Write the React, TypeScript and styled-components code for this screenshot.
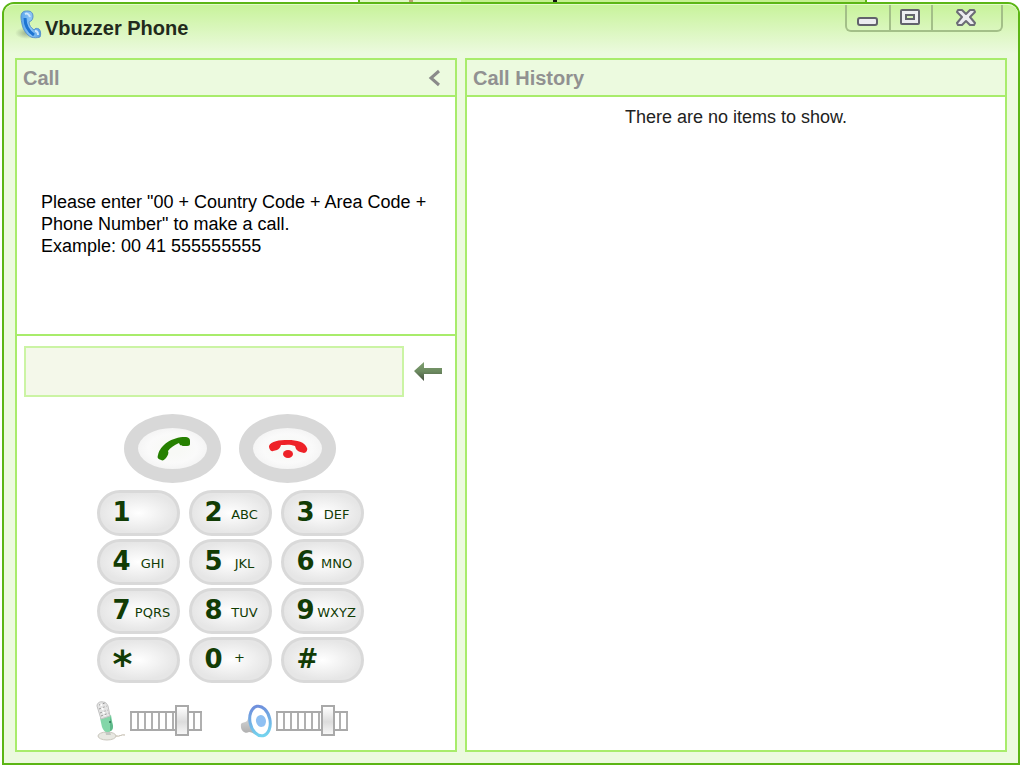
import React from "react";
import styled, { createGlobalStyle } from "styled-components";

const GlobalStyle = createGlobalStyle`
  * { box-sizing: border-box; }
  body {
    margin: 0;
    background: #fff;
    font-family: "Liberation Sans", Arial, sans-serif;
    color: #000;
  }
  button { font-family: inherit; padding: 0; border: 0; background: none; }
`;

const Desktop = styled.div`
  display: flex;
  flex-direction: column;
  min-height: 100vh;
  padding-left: 2px;
`;

const BackWindow = styled.div`
  display: flex;
  justify-content: center;
  align-self: flex-start;
  width: 50%;
  height: 2px;
  margin-left: 35%;
  border: solid #5cb615;
  border-width: 0 2px;
  background: linear-gradient(to right, #dff8c4 20%, #c4f08f 20%);
`;

const BackSpot = styled.span<{ $color: string; $push: number }>`
  width: 4px;
  height: 2px;
  margin-right: ${(p) => p.$push}px;
  background: ${(p) => p.$color};
`;

const Window = styled.main`
  flex: 1;
  display: flex;
  flex-direction: column;
  border: 2px solid #5cb615;
  border-radius: 12px 12px 0 0;
  background: #ecfadf;
  padding: 0 11px 11px;
`;

const TitleBar = styled.header`
  display: flex;
  justify-content: space-between;
  align-items: flex-start;
  height: 54px;
  margin: 0 -11px;
  padding: 0 15px 0 11px;
  border-radius: 10px 10px 0 0;
  border-top: 1px solid #e4facb;
  background: linear-gradient(#c8f39b, #ecfadf 92%);
`;

const Title = styled.h1`
  display: flex;
  align-items: flex-start;
  gap: 2px;
  margin: 5px 0 0;
  font-size: 20px;
  line-height: 36px;
  color: #222a1c;
`;

const Caption = styled.div`
  display: flex;
  height: 27px;
  border: 2px solid #a3bf88;
  border-top: 0;
  border-radius: 0 0 6px 6px;
`;

const CaptionButton = styled.button<{ $wide?: boolean }>`
  display: flex;
  align-items: center;
  justify-content: center;
  width: ${(p) => (p.$wide ? 70 : 42)}px;
  padding-right: 2px;
  & + & { border-left: 2px solid #a3bf88; }
`;

const Columns = styled.div`
  flex: 1;
  display: grid;
  grid-template-columns: 442fr 542fr;
  gap: 8px;
`;

const Panel = styled.section`
  display: flex;
  flex-direction: column;
  border: 2px solid #a8ec6b;
  background: #fff;
`;

const PanelHeader = styled.div`
  display: flex;
  align-items: center;
  justify-content: space-between;
  height: 37px;
  padding: 0 14px 0 6px;
  border-bottom: 2px solid #a8ec6b;
  background: #ecfadf;
`;

const PanelTitle = styled.h2`
  margin: 0;
  font-size: 20px;
  line-height: 24px;
  color: #919191;
`;

const IconButton = styled.button`
  display: flex;
`;

const Message = styled.p`
  flex: 1;
  display: flex;
  align-items: center;
  margin: 0;
  padding: 16px 20px 0 24px;
  font-size: 18px;
  line-height: 22px;
`;

const Empty = styled.p`
  margin: 9px 0 0;
  text-align: center;
  font-size: 18px;
  line-height: 22px;
  color: #222;
`;

const Dialer = styled.div`
  display: flex;
  flex-direction: column;
  padding: 10px 13px 8px 7px;
  border-top: 2px solid #a8ec6b;
`;

const NumberRow = styled.div`
  display: flex;
  align-items: center;
  gap: 10px;
`;

const NumberInput = styled.input`
  flex: 1;
  min-width: 0;
  height: 51px;
  padding: 0 10px;
  border: 2px solid #cbf4a4;
  border-radius: 0;
  background: #f4f8ea;
  font: 24px "Liberation Sans", Arial, sans-serif;
  outline: none;
`;

const Pad = styled.div`
  display: flex;
  flex-direction: column;
  align-items: center;
  padding: 17px 6px 0 0;
`;

const CallRow = styled.div`
  display: flex;
  gap: 18px;
  margin-bottom: 7px;
`;

const OvalButton = styled.button`
  display: flex;
  align-items: center;
  justify-content: center;
  width: 97px;
  height: 69px;
  border: 14px solid #d8d8d8;
  border-radius: 50%;
  background: radial-gradient(#f8f9f6 20%, #fafafa 50%, #ededed 100%);
`;

const Keys = styled.div`
  display: grid;
  grid-template-columns: repeat(3, 83px);
  gap: 3px 9px;
`;

const Key = styled.button`
  display: flex;
  align-items: flex-start;
  height: 46px;
  padding: 2px 2px 0 13px;
  border: 3px solid #d9d9d9;
  border-radius: 23px;
  background: radial-gradient(closest-side, #fff, #e6e6e6);
  color: #123c05;
`;

const Digit = styled.span<{ $star?: boolean }>`
  min-width: 18px;
  font: bold 26px/34px "DejaVu Sans", Verdana, sans-serif;
  ${(p) => p.$star && "font-size: 38px; line-height: 44px;"}
`;

const Letters = styled.span<{ $symbol?: boolean }>`
  flex: 1;
  padding: ${(p) => (p.$symbol ? "6px 10px 0 0" : "10px 0 0")};
  text-align: center;
  font: 13px/20px "DejaVu Sans", Verdana, sans-serif;
`;

const Volumes = styled.div`
  display: flex;
  align-self: stretch;
  justify-content: center;
  gap: 38px;
  margin-top: 18px;
  padding: 0 16px 1px 0;
`;

const Volume = styled.label`
  display: flex;
  align-items: center;
  gap: 4px;
  height: 40px;
`;

const Slider = styled.input`
  appearance: none;
  width: 72px;
  height: 32px;
  margin: 0;
  background: none;
  &::-webkit-slider-runnable-track {
    height: 20px;
    border: solid #a9a9a9;
    border-width: 2px 0;
    background: repeating-linear-gradient(to right, #b0b0b0 0 2px, #fff 2px 7px);
  }
  &::-webkit-slider-thumb {
    appearance: none;
    width: 14px;
    height: 31px;
    margin-top: -8px;
    border: 2px solid #a9a9a9;
    border-radius: 0;
    background: linear-gradient(#fff, #dcdcdc 55%, #f6f6f6);
  }
`;

const PhoneLogo = () => (
  <svg width="28" height="30" viewBox="0 0 28 30" aria-hidden="true">
    <defs>
      <linearGradient id="logo" x1="0" x2="1">
        <stop offset="0" stopColor="#5ba5ea" />
        <stop offset=".5" stopColor="#8cc6f7" />
        <stop offset="1" stopColor="#4f9be4" />
      </linearGradient>
      <radialGradient id="shade">
        <stop offset="0" stopColor="#6f8068" stopOpacity=".6" />
        <stop offset="1" stopColor="#6f8068" stopOpacity="0" />
      </radialGradient>
    </defs>
    <ellipse cx="12" cy="23" rx="12" ry="6" fill="url(#shade)" />
    <path
      d="M8 2C5 4 6 9 7 14c1 6 5 11 9 13 3 1 6 1 9 0 1-2 1-6-1-8-2-1-4-1-5 1-3-2-5-5-5-8 3-1 4-3 4-6 0-3-2-5-5-5-2 0-4 0-5 1z"
      fill="url(#logo)"
      stroke="#5a94cc"
    />
    <path d="M10 8c0 8 3 13 9 17" fill="none" stroke="#1c74d2" strokeWidth="3" />
    <path d="M10 4c2-1 4 0 5 3M20 21c2 0 3 1 3 4" fill="none" stroke="#cfe8fd" strokeWidth="2" />
  </svg>
);

const MinimizeIcon = () => (
  <svg width="22" height="20" viewBox="0 0 22 20" aria-hidden="true">
    <rect x="2" y="10" width="19" height="7" rx="2" fill="#ececf0" stroke="#62626c" strokeWidth="2" />
  </svg>
);

const MaximizeIcon = () => (
  <svg width="22" height="20" viewBox="0 0 22 20" aria-hidden="true">
    <rect x="2" y="2" width="18" height="14" rx="1" fill="#ececf0" stroke="#62626c" strokeWidth="2" />
    <rect x="7" y="7" width="8" height="4" fill="#d5efb5" stroke="#62626c" strokeWidth="2" />
  </svg>
);

const CloseIcon = () => (
  <svg width="22" height="20" viewBox="0 0 22 20" aria-hidden="true">
    <path
      d="M3 2h4l4 4 4-4h4l1 2-5 5 5 6-1 2h-4l-4-4-4 4H3l-1-2 5-6-5-5z"
      fill="#ececf0"
      stroke="#6b6b75"
      strokeWidth="2"
      strokeLinejoin="round"
    />
  </svg>
);

const CollapseIcon = () => (
  <svg width="14" height="18" viewBox="0 0 14 18" aria-hidden="true">
    <path d="M12 2L4 9l8 7" fill="none" stroke="#8a8a8a" strokeWidth="3" />
  </svg>
);

const BackIcon = () => (
  <svg width="28" height="20" viewBox="0 0 28 20" aria-hidden="true">
    <defs>
      <linearGradient id="back" x2="0" y2="1">
        <stop offset="0" stopColor="#7fa070" />
        <stop offset=".5" stopColor="#6c8a60" />
        <stop offset="1" stopColor="#45503f" />
      </linearGradient>
    </defs>
    <path d="M0 9L10 0v6h18v6H10v7z" fill="url(#back)" />
  </svg>
);

const AnswerIcon = () => (
  <svg width="36" height="26" viewBox="0 0 36 26" aria-hidden="true">
    <path
      d="M3 19C5 9 17 1 30 1c3 0 5 1 5 4v3c0 2-2 2-5 2s-5 0-6-3c-5 2-9 5-11 8 1 2 0 4-2 7-2 2-3 3-5 2-3-1-4-2-3-5z"
      fill="#268000"
    />
  </svg>
);

const HangUpIcon = () => (
  <svg width="40" height="26" viewBox="0 0 40 26" aria-hidden="true">
    <path
      d="M1 10C3 5 11 4 20 4s17 2 19 8c1 2-1 5-3 5-4-1-7-2-8-4l-1-3c-5-2-10-1-14-1-1 3-2 4-4 5l-4 1c-2 1-4-2-4-5z"
      fill="#ee2228"
    />
    <ellipse cx="20" cy="18" rx="5" ry="4" fill="#ee2228" />
  </svg>
);

const MicIcon = () => (
  <svg width="30" height="40" viewBox="0 0 30 40" aria-hidden="true">
    <ellipse cx="11" cy="35" rx="9" ry="4" fill="#e8e8e2" stroke="#c9c6bd" />
    <path d="M20 35c4 1 5-2 9-1" fill="none" stroke="#bdb5a5" strokeWidth="1" />
    <path d="M9 29l4-2 2 7h-5z" fill="#c4c8c2" />
    <path d="M4 17l11-3 2 11c0 4-3 6-6 6-2 0-4-2-5-5z" fill="#83d6a8" />
    <path d="M14 15l3 10c0 3-1 5-3 5z" fill="#5fb98a" />
    <path d="M1 5c0-3 3-5 6-4 3 0 4 2 5 4l2 10-9 3z" fill="#e4e4e4" stroke="#c2c2c2" />
    <path
      d="M3 4l6-2M3 8l8-3M4 12l8-3M5 15l8-3"
      stroke="#999"
      strokeWidth="1"
      strokeDasharray="2 2"
    />
    <path d="M5 3l4 12" stroke="#fff" strokeWidth="2" strokeDasharray="2 2" />
    <circle cx="14" cy="21" r="1" fill="#2f6e55" />
  </svg>
);

const SpeakerIcon = () => (
  <svg width="32" height="34" viewBox="0 0 32 34" aria-hidden="true">
    <defs>
      <linearGradient id="ring" x2="0" y2="1">
        <stop offset="0" stopColor="#6f8fdc" />
        <stop offset="1" stopColor="#74d3ee" />
      </linearGradient>
      <linearGradient id="cone" x2="0" y2="1">
        <stop offset="0" stopColor="#f0f0f0" />
        <stop offset="1" stopColor="#a8a8a8" />
      </linearGradient>
    </defs>
    <path d="M1 20c1-2 4-1 6-3l6-14 9 29c-5 0-10-4-13-4-3 2-9 0-8-8z" fill="url(#cone)" />
    <ellipse cx="20" cy="17" rx="10" ry="15" transform="rotate(-12 20 17)" fill="#fff" stroke="url(#ring)" strokeWidth="3" />
    <ellipse cx="21" cy="17" rx="5" ry="6" transform="rotate(-12 21 17)" fill="#8fc0f2" />
  </svg>
);

const KEYS: [string, string][] = [
  ["1", ""], ["2", "ABC"], ["3", "DEF"],
  ["4", "GHI"], ["5", "JKL"], ["6", "MNO"],
  ["7", "PQRS"], ["8", "TUV"], ["9", "WXYZ"],
  ["*", ""], ["0", "+"], ["#", ""],
];

export default function App() {
  const [number, setNumber] = React.useState("");
  return (
    <Desktop>
      <GlobalStyle />
      <BackWindow>
        <BackSpot $color="#b8a070" $push={140} />
        <BackSpot $color="#111" $push={260} />
      </BackWindow>
      <Window>
        <TitleBar>
          <Title>
            <PhoneLogo />
            Vbuzzer Phone
          </Title>
          <Caption>
            <CaptionButton aria-label="Minimize"><MinimizeIcon /></CaptionButton>
            <CaptionButton aria-label="Maximize"><MaximizeIcon /></CaptionButton>
            <CaptionButton aria-label="Close" $wide><CloseIcon /></CaptionButton>
          </Caption>
        </TitleBar>
        <Columns>
          <Panel>
            <PanelHeader>
              <PanelTitle>Call</PanelTitle>
              <IconButton aria-label="Collapse"><CollapseIcon /></IconButton>
            </PanelHeader>
            <Message>
              <span>
                Please enter "00 + Country Code + Area Code + Phone Number" to make a call.
                <br />
                Example: 00 41 555555555
              </span>
            </Message>
            <Dialer>
              <NumberRow>
                <NumberInput
                  type="tel"
                  aria-label="Phone number"
                  value={number}
                  onChange={(e) => setNumber(e.target.value)}
                />
                <IconButton aria-label="Delete last digit" onClick={() => setNumber(number.slice(0, -1))}>
                  <BackIcon />
                </IconButton>
              </NumberRow>
              <Pad>
                <CallRow>
                  <OvalButton aria-label="Call"><AnswerIcon /></OvalButton>
                  <OvalButton aria-label="Hang up"><HangUpIcon /></OvalButton>
                </CallRow>
                <Keys>
                  {KEYS.map(([digit, letters]) => (
                    <Key key={digit} onClick={() => setNumber(number + digit)}>
                      <Digit $star={digit === "*"}>{digit}</Digit>
                      {letters && <Letters $symbol={letters === "+"}>{letters}</Letters>}
                    </Key>
                  ))}
                </Keys>
                <Volumes>
                  <Volume>
                    <MicIcon />
                    <Slider type="range" aria-label="Microphone volume" defaultValue={78} />
                  </Volume>
                  <Volume>
                    <SpeakerIcon />
                    <Slider type="range" aria-label="Speaker volume" defaultValue={78} />
                  </Volume>
                </Volumes>
              </Pad>
            </Dialer>
          </Panel>
          <Panel>
            <PanelHeader>
              <PanelTitle>Call History</PanelTitle>
            </PanelHeader>
            <Empty>There are no items to show.</Empty>
          </Panel>
        </Columns>
      </Window>
    </Desktop>
  );
}
